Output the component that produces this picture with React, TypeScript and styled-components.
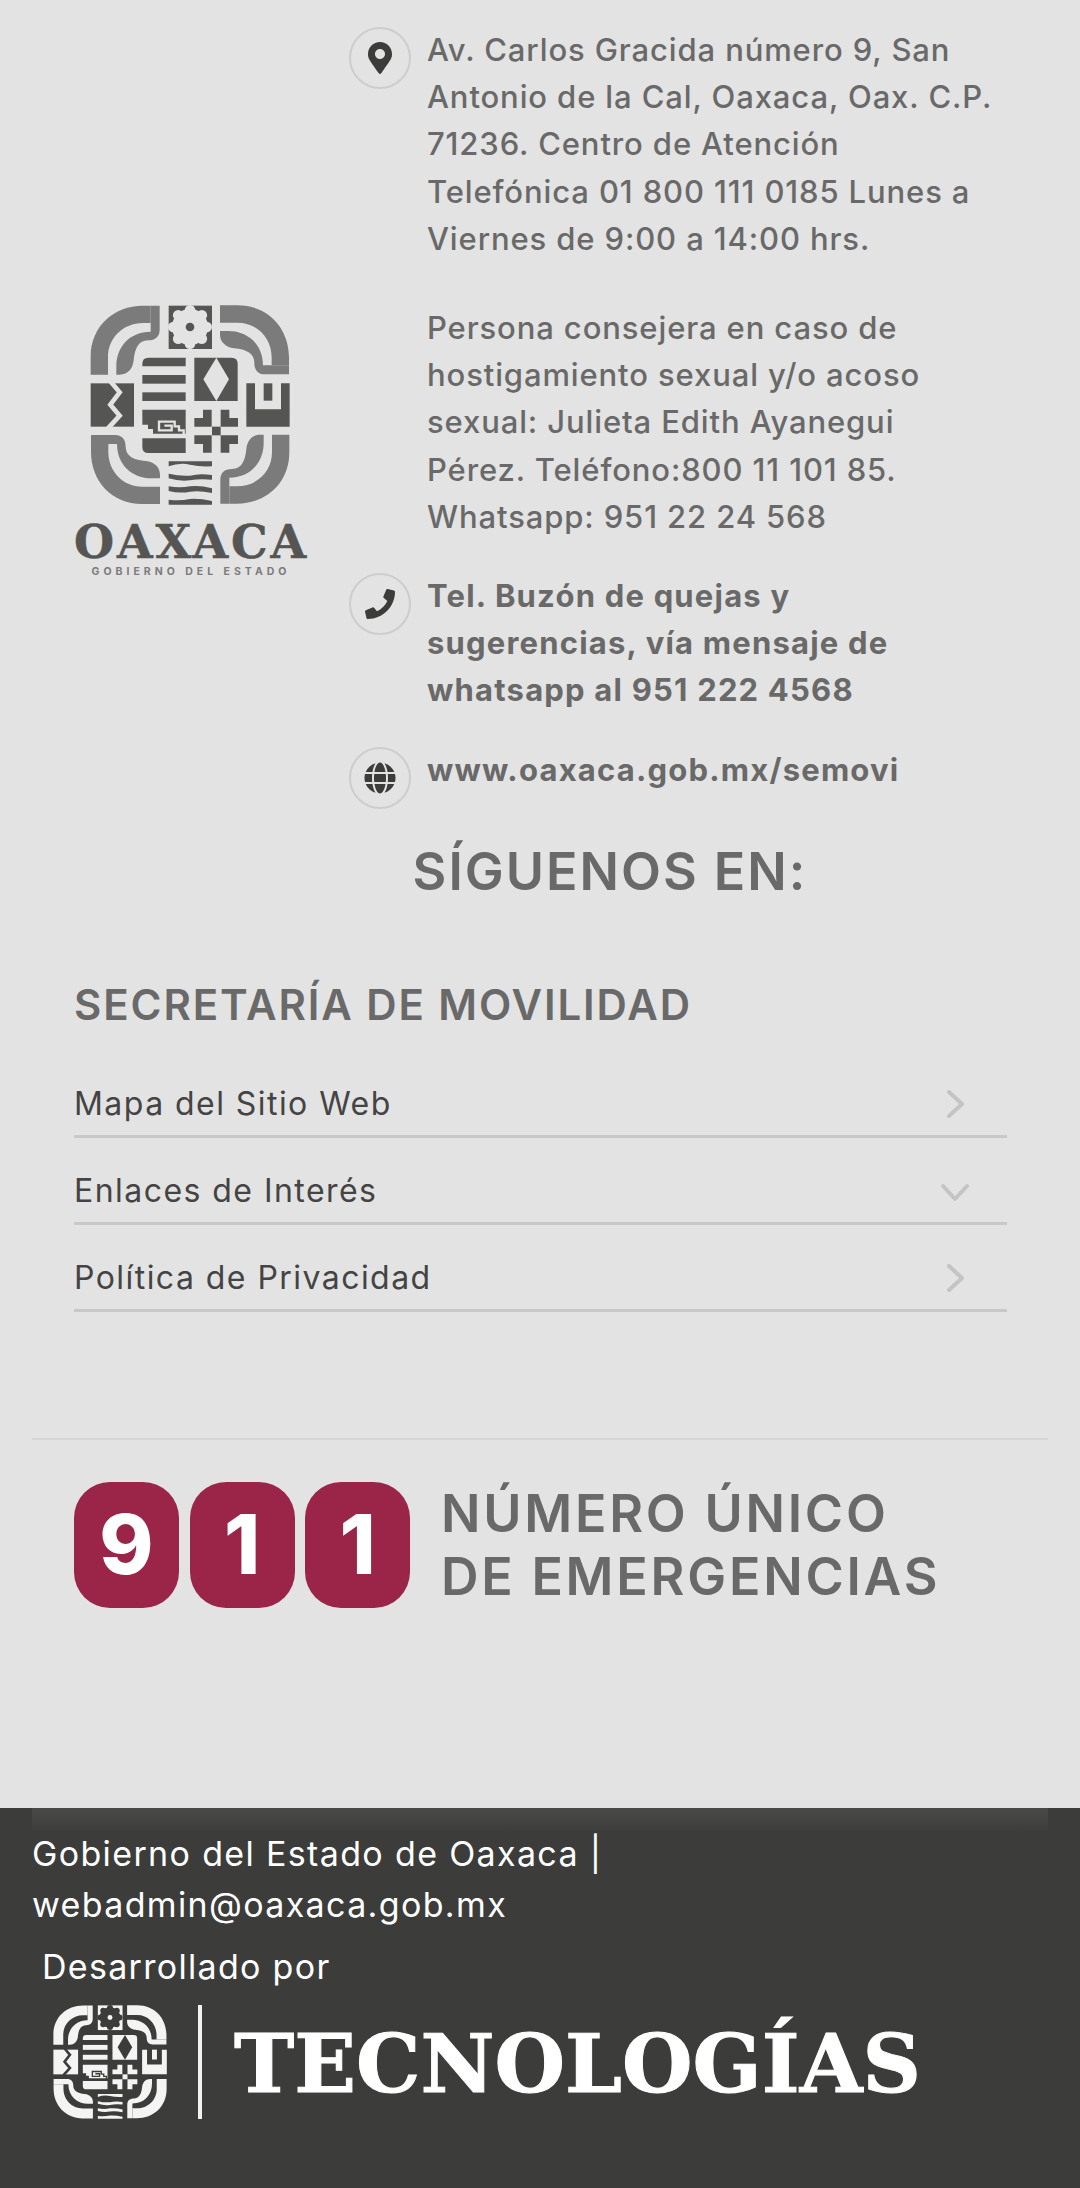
import React from 'react';
import styled, {createGlobalStyle} from 'styled-components';
import {FaGlobe, FaMapMarkerAlt, FaPhone} from 'react-icons/fa';

const GlobalStyle = createGlobalStyle`
  html, body {
    margin: 0;
    padding: 0;
    background: #e3e3e3;
    font-family: Inter, "Open Sans", sans-serif;
  }
`;

const Page = styled.div`
  width: 1080px;
  height: 2188px;
  overflow: hidden;
  display: flex;
  flex-direction: column;
`;

const Top = styled.section`
  display: flex;
  padding: 26px 0 0 74px;
`;

const Brand = styled.div`
  width: 275px;
  flex-shrink: 0;
  padding-top: 279px;
`;

const BrandMark = styled.div`
  width: 200px;
  height: 200px;
  margin: 0 0 19px 16px;
`;

const BrandName = styled.div`
  width: 234px;
  font: 700 46px/36px "DejaVu Serif", serif;
  letter-spacing: 2.9px;
  -webkit-text-stroke: 0.5px #555554;
  color: #555554;
  white-space: nowrap;
`;

const BrandSub = styled.div`
  width: 234px;
  margin-top: 6px;
  text-align: center;
  font-size: 10.5px;
  line-height: 12px;
  font-weight: 700;
  letter-spacing: 4px;
  color: #7b7b7b;
  white-space: nowrap;
`;

const Contact = styled.div`
  flex: 1;
`;

const ContactRow = styled.div<{$gap: number}>`
  display: flex;
  gap: 16px;
  margin-bottom: ${p => p.$gap}px;
`;

const IconRing = styled.span`
  width: 62px;
  height: 62px;
  margin-top: 1px;
  flex-shrink: 0;
  box-sizing: border-box;
  border: 2px solid #cdcdcd;
  border-radius: 50%;
  display: flex;
  align-items: center;
  justify-content: center;
  color: #3c3c3b;
`;

const IconSpacer = styled.span`
  width: 62px;
  flex-shrink: 0;
`;

const ContactText = styled.div<{$bold?: boolean}>`
  font-size: 31px;
  line-height: 47.2px;
  letter-spacing: ${p => (p.$bold ? '1.2px' : '0.88px')};
  font-weight: ${p => (p.$bold ? 700 : 450)};
  color: #696969;
  white-space: nowrap;
`;

const FollowTitle = styled.h2`
  width: 522px;
  margin: 33px 0 0;
  text-align: center;
  font-size: 52px;
  line-height: 60px;
  letter-spacing: 2px;
  font-weight: 600;
  color: #696969;
`;

const Menu = styled.section`
  margin: 78px 73px 0 74px;
`;

const MenuTitle = styled.h3`
  margin: 0 0 21px;
  font-size: 42px;
  line-height: 50px;
  letter-spacing: 1.9px;
  font-weight: 600;
  color: #696969;
`;

const MenuRow = styled.div`
  height: 87px;
  box-sizing: border-box;
  border-bottom: 3px solid #c8c8c8;
  display: flex;
  align-items: center;
  justify-content: space-between;
  padding: 21px 38px 0 0;
  font-size: 32px;
  letter-spacing: 1.45px;
  color: #444;
`;

const Chevron = styled.svg<{$open?: boolean}>`
  width: 28px;
  height: 28px;
  margin-top: ${p => (p.$open ? 3 : 1)}px;
  fill: none;
  stroke: #c4c4c4;
  stroke-width: 4;
  stroke-linecap: round;
  stroke-linejoin: round;
  transform: rotate(${p => (p.$open ? 90 : 0)}deg);
`;

const Divider = styled.hr`
  margin: 126px 32px 0;
  border: 0;
  height: 2px;
  background: #d6d6d6;
`;

const Emergency = styled.section`
  display: flex;
  padding: 42px 0 0 74px;
`;

const Digits = styled.div`
  display: flex;
  gap: 10.5px;
  margin-right: 31px;
`;

const Digit = styled.div`
  width: 105px;
  height: 126px;
  border-radius: 36px;
  background: #9b2548;
  color: #fff;
  display: flex;
  align-items: center;
  justify-content: center;
  font-size: 82px;
  font-weight: 800;
`;

const EmergencyText = styled.div`
  font-size: 52px;
  line-height: 63px;
  letter-spacing: 2.75px;
  font-weight: 600;
  color: #696969;
  white-space: nowrap;
`;

const Footer = styled.footer`
  margin-top: 200px;
  flex: 1;
  background: #3c3c3b;
  padding: 0 32px;
  color: #fff;
`;

const FooterInner = styled.div`
  padding-top: 20px;
  background: linear-gradient(#4a4b48, #3e3e3c 22px, #3c3c3b 24px);
`;

const FooterLine = styled.div`
  font-size: 34px;
  line-height: 51px;
  letter-spacing: 1.35px;
  white-space: nowrap;
`;

const Credit = styled.div`
  padding: 11px 0 0 10px;
  font-size: 34px;
  line-height: 51px;
  letter-spacing: 1.3px;
`;

const TechRow = styled.div`
  display: flex;
  align-items: center;
  margin: 12px 0 0 21px;
`;

const TechMark = styled.div`
  width: 114px;
  height: 114px;
`;

const TechRule = styled.span`
  width: 4px;
  height: 114px;
  margin: 0 32px 0 31px;
  background: #f2f2f2;
`;

const TechName = styled.div`
  padding-top: 3px;
  font: 700 81px/114px "DejaVu Serif", serif;
  -webkit-text-stroke: 1px #fff;
  color: #fff;
  white-space: nowrap;
`;

type EmblemProps = {
  ink: string
  band: string
  cut: string
}

const Corner: React.FC<{band: string; turn: number}> = ({band, turn}) => (
  <g transform={`rotate(${turn} 451 405)`} fill={band}>
    <path d="M153 315V262C153 170 222 108 310 108H333V160H310C250 160 205 205 205 262V315Z"/>
    <path d="M230 315V290C230 232 270 186 333 186V108H360V180C360 200 348 212 325 212C296 212 285 238 282 272C279 300 262 315 240 315Z"/>
  </g>
);

const Emblem: React.FC<EmblemProps> = ({ink, band, cut}) => (
  <svg viewBox="151 106 600 600" width="100%" height="100%">
    {[0, 90, 180, 270].map(turn => <Corner key={turn} band={band} turn={turn}/>)}
    <g fill={ink}>
      {/* flor */}
      <rect x="387" y="108" width="130" height="130"/>
      <g fill={cut}>
        <circle cx="451" cy="172" r="54"/>
        {[0, 45, 90, 135, 180, 225, 270, 315].map(a => (
          <circle key={a} cx={451 + 50 * Math.cos(a * Math.PI / 180)} cy={172 + 50 * Math.sin(a * Math.PI / 180)} r="16"/>
        ))}
      </g>
      <circle cx="451" cy="172" r="13"/>

      {/* franjas */}
      <path d="M326 264H438V290H308V282Q308 264 326 264Z"/>
      <rect x="308" y="316" width="130" height="26"/>
      <rect x="308" y="368" width="130" height="26"/>
      <path d="M308 420H438V492H340V478H325V465H308Z"/>
      <path fill="none" stroke={cut} strokeWidth="7" d="M432 496V482H418V470H405V456H358V482H396V468H374"/>
      <path d="M308 506H438V550H326Q308 550 308 532Z"/>

      {/* rombo */}
      <path d="M464 264H576Q594 264 594 282V394H464Z"/>
      <path fill={cut} d="M530 264L568 329L530 394L491 329Z"/>

      {/* zigzag */}
      <rect x="153" y="341" width="130" height="130"/>
      <path fill="none" stroke={cut} strokeWidth="14" d="M212 335L240 368L212 405L240 438L205 476"/>

      {/* u */}
      <path d="M620 341H646V419H724V341H750V471H620Z"/>
      <rect x="672" y="341" width="26" height="52"/>

      {/* cruz */}
      <path d="M490 420H516V471H464V445H490Z"/>
      <path d="M543 420H569V445H595V471H543Z"/>
      <path d="M464 497H516V549H490V523H464Z"/>
      <path d="M543 497H595V523H569V549H543Z"/>
      <rect x="517" y="471" width="26" height="26"/>

      {/* agua */}
      <path d="M387 575H517V590Q480 592 451 585Q420 578 387 590Z"/>
      <path d="M387 612Q420 620 451 618Q480 610 517 616V630Q480 626 451 632Q420 636 387 626Z"/>
      <path d="M387 650Q420 656 451 650Q480 646 517 656V670Q480 662 451 666Q420 672 387 664Z"/>
      <path d="M387 690Q420 694 451 688Q480 686 517 694V705H387Z"/>
    </g>
  </svg>
);

const menuItems = [
  {label: 'Mapa del Sitio Web', open: false},
  {label: 'Enlaces de Interés', open: true},
  {label: 'Política de Privacidad', open: false},
];

const App: React.FC = () => (
  <Page>
    <GlobalStyle/>
    <Top>
      <Brand>
        <BrandMark><Emblem ink="#555554" band="#7a7b7a" cut="#e3e3e3"/></BrandMark>
        <BrandName>OAXACA</BrandName>
        <BrandSub>GOBIERNO DEL ESTADO</BrandSub>
      </Brand>
      <Contact>
        <ContactRow $gap={42}>
          <IconRing><FaMapMarkerAlt size={32}/></IconRing>
          <ContactText>
            Av. Carlos Gracida número 9, San<br/>
            Antonio de la Cal, Oaxaca, Oax. C.P.<br/>
            71236. Centro de Atención<br/>
            Telefónica 01 800 111 0185 Lunes a<br/>
            Viernes de 9:00 a 14:00 hrs.
          </ContactText>
        </ContactRow>
        <ContactRow $gap={32}>
          <IconSpacer/>
          <ContactText>
            Persona consejera en caso de<br/>
            hostigamiento sexual y/o acoso<br/>
            sexual: Julieta Edith Ayanegui<br/>
            Pérez. Teléfono:800 11 101 85.<br/>
            Whatsapp: 951 22 24 568
          </ContactText>
        </ContactRow>
        <ContactRow $gap={32}>
          <IconRing><FaPhone size={30}/></IconRing>
          <ContactText $bold>
            Tel. Buzón de quejas y<br/>
            sugerencias, vía mensaje de<br/>
            whatsapp al 951 222 4568
          </ContactText>
        </ContactRow>
        <ContactRow $gap={0}>
          <IconRing><FaGlobe size={32}/></IconRing>
          <ContactText $bold>www.oaxaca.gob.mx/semovi</ContactText>
        </ContactRow>
        <FollowTitle>SÍGUENOS EN:</FollowTitle>
      </Contact>
    </Top>

    <Menu>
      <MenuTitle>SECRETARÍA DE MOVILIDAD</MenuTitle>
      {menuItems.map(item => (
        <MenuRow key={item.label}>
          {item.label}
          <Chevron $open={item.open} viewBox="0 0 28 28">
            <polyline points="8,2 21,14 8,26"/>
          </Chevron>
        </MenuRow>
      ))}
    </Menu>

    <Divider/>

    <Emergency>
      <Digits>
        <Digit>9</Digit>
        <Digit>1</Digit>
        <Digit>1</Digit>
      </Digits>
      <EmergencyText>NÚMERO ÚNICO<br/>DE EMERGENCIAS</EmergencyText>
    </Emergency>

    <Footer>
      <FooterInner>
        <FooterLine>Gobierno del Estado de Oaxaca |</FooterLine>
        <FooterLine>webadmin@oaxaca.gob.mx</FooterLine>
      </FooterInner>
      <Credit>Desarrollado por</Credit>
      <TechRow>
        <TechMark><Emblem ink="#f4f4f4" band="#f4f4f4" cut="#3c3c3b"/></TechMark>
        <TechRule/>
        <TechName>TECNOLOGÍAS</TechName>
      </TechRow>
    </Footer>
  </Page>
);

export default App;
